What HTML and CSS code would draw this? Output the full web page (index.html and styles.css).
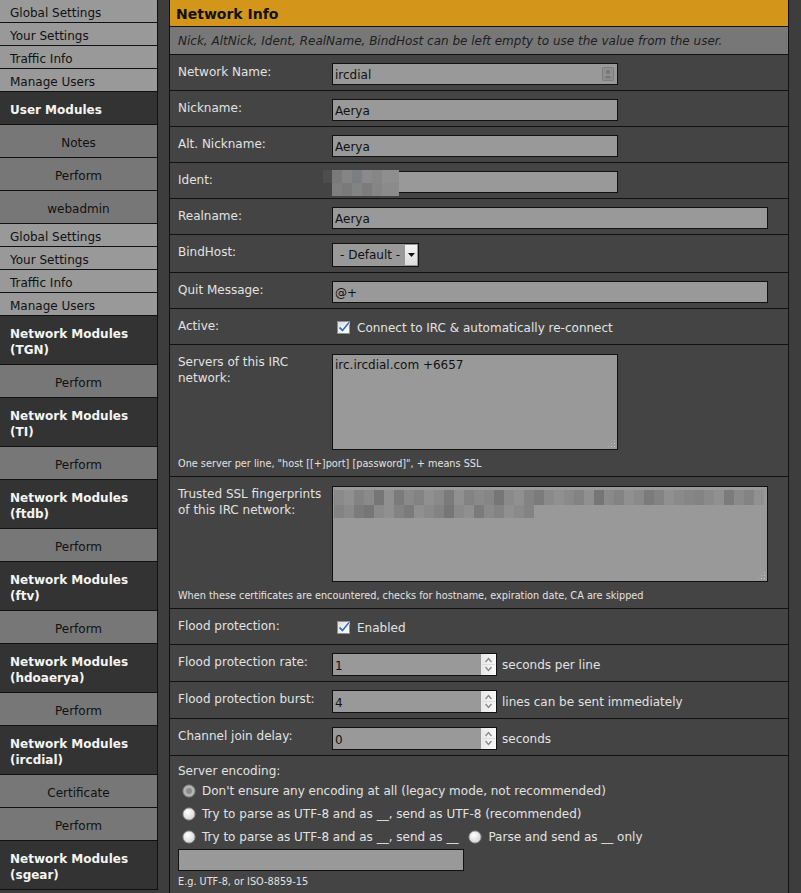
FILE: index.html
```html
<!DOCTYPE html>
<html>
<head>
<meta charset="utf-8">
<title>Network Info</title>
<link rel="stylesheet" href="styles.css">
</head>
<body>
<div class="page">
  <nav class="side">
    <a class="it lt">Global Settings</a>
    <a class="it lt">Your Settings</a>
    <a class="it lt">Traffic Info</a>
    <a class="it lt">Manage Users</a>
    <div class="it dk">User Modules</div>
    <a class="it mid">Notes</a>
    <a class="it mid">Perform</a>
    <a class="it mid">webadmin</a>
    <a class="it lt">Global Settings</a>
    <a class="it lt">Your Settings</a>
    <a class="it lt">Traffic Info</a>
    <a class="it lt">Manage Users</a>
    <div class="it dk">Network Modules (TGN)</div>
    <a class="it mid">Perform</a>
    <div class="it dk">Network Modules (TI)</div>
    <a class="it mid">Perform</a>
    <div class="it dk">Network Modules (ftdb)</div>
    <a class="it mid">Perform</a>
    <div class="it dk">Network Modules (ftv)</div>
    <a class="it mid">Perform</a>
    <div class="it dk">Network Modules (hdoaerya)</div>
    <a class="it mid">Perform</a>
    <div class="it dk">Network Modules (ircdial)</div>
    <a class="it mid">Certificate</a>
    <a class="it mid">Perform</a>
    <div class="it dk">Network Modules (sgear)</div>
  </nav>

  <main class="panel">
    <div class="ph">Network Info</div>
    <div class="pnote">Nick, AltNick, Ident, RealName, BindHost can be left empty to use the value from the user.</div>

    <div class="row">
      <div class="lbl">Network Name:</div>
      <div class="fld"><span class="wrap"><input class="txt short" value="ircdial"><svg class="card" viewBox="0 0 12 14" width="12" height="14"><rect x="0.5" y="0.5" width="11" height="13" rx="1" fill="#8e8e8e" stroke="#777"/><circle cx="6" cy="5" r="2" fill="#6f6f6f"/><path d="M2.5 11 Q6 6.5 9.5 11 Z" fill="#6f6f6f"/><rect x="3" y="11.5" width="6" height="1" fill="#7a8a7a"/></svg></span></div>
    </div>
    <div class="row">
      <div class="lbl">Nickname:</div>
      <div class="fld"><input class="txt short" value="Aerya"></div>
    </div>
    <div class="row">
      <div class="lbl">Alt. Nickname:</div>
      <div class="fld"><input class="txt short" value="Aerya"></div>
    </div>
    <div class="row">
      <div class="lbl">Ident:</div>
      <div class="fld"><span class="wrap"><input class="txt short" value=""><svg class="blur-id" width="76" height="26" viewBox="0 0 76 26"><rect x="0" y="0" width="9" height="13" fill="#4d4d4d"/><rect x="9" y="0" width="10" height="13" fill="#7a7a7a"/><rect x="19" y="0" width="10" height="13" fill="#858585"/><rect x="29" y="0" width="10" height="13" fill="#7b7f7f"/><rect x="39" y="0" width="10" height="13" fill="#8a8a8a"/><rect x="49" y="0" width="10" height="13" fill="#868686"/><rect x="59" y="0" width="17" height="13" fill="#8e8e8e"/><rect x="9" y="13" width="10" height="13" fill="#7e7e7e"/><rect x="19" y="13" width="10" height="13" fill="#7a7a7a"/><rect x="29" y="13" width="10" height="13" fill="#838383"/><rect x="39" y="13" width="10" height="13" fill="#7c7c7c"/><rect x="49" y="13" width="10" height="13" fill="#858585"/><rect x="59" y="13" width="17" height="13" fill="#8b8b8b"/></svg></span></div>
    </div>
    <div class="row">
      <div class="lbl">Realname:</div>
      <div class="fld"><input class="txt long" value="Aerya"></div>
    </div>
    <div class="row">
      <div class="lbl">BindHost:</div>
      <div class="fld"><span class="sel"><span class="selv">- Default -</span><span class="selb"><svg width="7" height="4" viewBox="0 0 7 4"><path d="M0 0H7L3.5 4Z" fill="#111"/></svg></span></span></div>
    </div>
    <div class="row">
      <div class="lbl">Quit Message:</div>
      <div class="fld"><input class="txt long" value="@+"></div>
    </div>
    <div class="row">
      <div class="lbl">Active:</div>
      <div class="fld chk"><svg class="cb" width="14" height="14" viewBox="0 0 14 14"><defs><linearGradient id="cbg" x1="0" y1="0" x2="1" y2="1"><stop offset="0" stop-color="#dcdcdc"/><stop offset="1" stop-color="#ffffff"/></linearGradient></defs><rect x="0.5" y="1.5" width="12" height="12" fill="url(#cbg)" stroke="#8e8f8f"/><path d="M2.5 7.5 L5.5 10.5 L12 2.5" fill="none" stroke="#fff" stroke-width="3.2"/><path d="M2.5 7.5 L5.5 10.5 L12 2.5" fill="none" stroke="#3b6fc4" stroke-width="1.8"/></svg><span>Connect to IRC &amp; automatically re-connect</span></div>
    </div>
    <div class="row">
      <div class="lbl">Servers of this IRC network:</div>
      <div class="fld"><span class="wrap"><textarea class="ta short">irc.ircdial.com +6657</textarea><i class="grip"></i></span></div>
      <div class="hint">One server per line, "host [[+]port] [password]", + means SSL</div>
    </div>
    <div class="row">
      <div class="lbl">Trusted SSL fingerprints of this IRC network:</div>
      <div class="fld"><span class="wrap"><textarea class="ta long"></textarea><i class="grip"></i><svg class="blur-fp" width="430" height="28" viewBox="0 0 430 28"><g><rect x="0" width="10" height="15" fill="#8a8a8a"/><rect x="10" width="10" height="15" fill="#909090"/><rect x="20" width="10" height="15" fill="#838383"/><rect x="30" width="10" height="15" fill="#8a8a8a"/><rect x="40" width="10" height="15" fill="#767676"/><rect x="50" width="10" height="15" fill="#909090"/><rect x="60" width="10" height="15" fill="#7b7b7b"/><rect x="70" width="10" height="15" fill="#8a8a8a"/><rect x="80" width="10" height="15" fill="#838383"/><rect x="90" width="10" height="15" fill="#909090"/><rect x="100" width="10" height="15" fill="#8a8a8a"/><rect x="110" width="10" height="15" fill="#7b7b7b"/><rect x="120" width="10" height="15" fill="#909090"/><rect x="130" width="10" height="15" fill="#838383"/><rect x="140" width="10" height="15" fill="#8a8a8a"/><rect x="150" width="10" height="15" fill="#868686"/><rect x="160" width="10" height="15" fill="#767676"/><rect x="170" width="10" height="15" fill="#8a8a8a"/><rect x="180" width="10" height="15" fill="#909090"/><rect x="190" width="10" height="15" fill="#838383"/><rect x="200" width="10" height="15" fill="#7b7b7b"/><rect x="210" width="10" height="15" fill="#8a8a8a"/><rect x="220" width="10" height="15" fill="#909090"/><rect x="230" width="10" height="15" fill="#8a8a8a"/><rect x="240" width="10" height="15" fill="#838383"/><rect x="250" width="10" height="15" fill="#909090"/><rect x="260" width="10" height="15" fill="#767676"/><rect x="270" width="10" height="15" fill="#8a8a8a"/><rect x="280" width="10" height="15" fill="#838383"/><rect x="290" width="10" height="15" fill="#909090"/><rect x="300" width="10" height="15" fill="#8a8a8a"/><rect x="310" width="10" height="15" fill="#7b7b7b"/><rect x="320" width="10" height="15" fill="#838383"/><rect x="330" width="10" height="15" fill="#909090"/><rect x="340" width="10" height="15" fill="#8a8a8a"/><rect x="350" width="10" height="15" fill="#868686"/><rect x="360" width="10" height="15" fill="#838383"/><rect x="370" width="10" height="15" fill="#8a8a8a"/><rect x="380" width="10" height="15" fill="#909090"/><rect x="390" width="10" height="15" fill="#7b7b7b"/><rect x="400" width="10" height="15" fill="#8a8a8a"/><rect x="410" width="10" height="15" fill="#838383"/><rect x="420" width="10" height="15" fill="#909090"/></g><g><rect x="0" y="15" width="10" height="13" fill="#838383"/><rect x="10" y="15" width="10" height="13" fill="#8a8a8a"/><rect x="20" y="15" width="10" height="13" fill="#7b7b7b"/><rect x="30" y="15" width="10" height="13" fill="#767676"/><rect x="40" y="15" width="10" height="13" fill="#8a8a8a"/><rect x="50" y="15" width="10" height="13" fill="#909090"/><rect x="60" y="15" width="10" height="13" fill="#838383"/><rect x="70" y="15" width="10" height="13" fill="#7b7b7b"/><rect x="80" y="15" width="10" height="13" fill="#909090"/><rect x="90" y="15" width="10" height="13" fill="#8a8a8a"/><rect x="100" y="15" width="10" height="13" fill="#838383"/><rect x="110" y="15" width="10" height="13" fill="#767676"/><rect x="120" y="15" width="10" height="13" fill="#8a8a8a"/><rect x="130" y="15" width="10" height="13" fill="#909090"/><rect x="140" y="15" width="10" height="13" fill="#7b7b7b"/><rect x="150" y="15" width="10" height="13" fill="#8a8a8a"/><rect x="160" y="15" width="10" height="13" fill="#838383"/><rect x="170" y="15" width="10" height="13" fill="#909090"/><rect x="180" y="15" width="10" height="13" fill="#8a8a8a"/><rect x="190" y="15" width="10" height="13" fill="#838383"/></g></svg></span></div>
      <div class="hint">When these certificates are encountered, checks for hostname, expiration date, CA are skipped</div>
    </div>
    <div class="row">
      <div class="lbl">Flood protection:</div>
      <div class="fld chk"><svg class="cb" width="14" height="14" viewBox="0 0 14 14"><rect x="0.5" y="1.5" width="12" height="12" fill="url(#cbg)" stroke="#8e8f8f"/><path d="M2.5 7.5 L5.5 10.5 L12 2.5" fill="none" stroke="#fff" stroke-width="3.2"/><path d="M2.5 7.5 L5.5 10.5 L12 2.5" fill="none" stroke="#3b6fc4" stroke-width="1.8"/></svg><span>Enabled</span></div>
    </div>
    <div class="row">
      <div class="lbl">Flood protection rate:</div>
      <div class="fld numrow"><span class="num"><input class="numv" value="1"><span class="spin"><svg width="15" height="21" viewBox="0 0 15 21"><path d="M4.5 8 L7.5 4.5 L10.5 8" fill="none" stroke="#888" stroke-width="1.3"/><path d="M4.5 13 L7.5 16.5 L10.5 13" fill="none" stroke="#888" stroke-width="1.3"/><line x1="1" y1="10.5" x2="14" y2="10.5" stroke="#ddd"/></svg></span></span><span class="after">seconds per line</span></div>
    </div>
    <div class="row">
      <div class="lbl">Flood protection burst:</div>
      <div class="fld numrow"><span class="num"><input class="numv" value="4"><span class="spin"><svg width="15" height="21" viewBox="0 0 15 21"><path d="M4.5 8 L7.5 4.5 L10.5 8" fill="none" stroke="#888" stroke-width="1.3"/><path d="M4.5 13 L7.5 16.5 L10.5 13" fill="none" stroke="#888" stroke-width="1.3"/><line x1="1" y1="10.5" x2="14" y2="10.5" stroke="#ddd"/></svg></span></span><span class="after">lines can be sent immediately</span></div>
    </div>
    <div class="row">
      <div class="lbl">Channel join delay:</div>
      <div class="fld numrow"><span class="num"><input class="numv" value="0"><span class="spin"><svg width="15" height="21" viewBox="0 0 15 21"><path d="M4.5 8 L7.5 4.5 L10.5 8" fill="none" stroke="#888" stroke-width="1.3"/><path d="M4.5 13 L7.5 16.5 L10.5 13" fill="none" stroke="#888" stroke-width="1.3"/><line x1="1" y1="10.5" x2="14" y2="10.5" stroke="#ddd"/></svg></span></span><span class="after">seconds</span></div>
    </div>
    <div class="row enc">
      <div class="enc-l">Server encoding:</div>
      <div class="rline"><svg class="rd" width="14" height="14" viewBox="0 0 14 14"><circle cx="7" cy="7" r="6" fill="#b4b4b4" stroke="#8a8a8a"/><circle cx="7" cy="7" r="3" fill="#8c8c8c"/></svg><span>Don't ensure any encoding at all (legacy mode, not recommended)</span></div>
      <div class="rline"><svg class="rd" width="14" height="14" viewBox="0 0 14 14"><defs><radialGradient id="rg" cx="0.4" cy="0.35" r="0.7"><stop offset="0" stop-color="#ffffff"/><stop offset="1" stop-color="#d2d2d2"/></radialGradient></defs><circle cx="7" cy="7" r="6" fill="url(#rg)" stroke="#9a9a9a"/></svg><span>Try to parse as UTF-8 and as __, send as UTF-8 (recommended)</span></div>
      <div class="rline"><svg class="rd" width="14" height="14" viewBox="0 0 14 14"><circle cx="7" cy="7" r="6" fill="url(#rg)" stroke="#9a9a9a"/></svg><span>Try to parse as UTF-8 and as __, send as __</span><svg class="rd rd2" width="14" height="14" viewBox="0 0 14 14"><circle cx="7" cy="7" r="6" fill="url(#rg)" stroke="#9a9a9a"/></svg><span>Parse and send as __ only</span></div>
      <input class="txt short encin" value="">
      <div class="hint eg">E.g. UTF-8, or ISO-8859-15</div>
    </div>
  </main>
</div>
</body>
</html>
```

FILE: styles.css
```css
html, body {
  margin: 0;
  padding: 0;
  height: 100%;
  overflow: hidden;
  background: #3d3d3d;
}
body {
  font-family: "DejaVu Sans", Verdana, sans-serif;
  font-size: 12px;
  color: #e2e2e2;
}
.page {
  display: flex;
  align-items: flex-start;
  gap: 11px;
}

/* sidebar */
.side {
  width: 157px;
  flex: none;
  border-right: 1px solid #111;
  display: flex;
  flex-direction: column;
}
.it {
  display: block;
  border-bottom: 1px solid #111;
  line-height: 16px;
  padding: 10px 10px 6px;
}
.lt {
  background: #999;
  color: #111;
  padding: 5px 10px 1px;
}
.mid {
  background: #777;
  color: #111;
  text-align: center;
}
.dk {
  background: #333;
  color: #f4f4f4;
  font-weight: bold;
}

/* panel */
.panel {
  width: 618px;
  flex: none;
  background: #444;
  border-left: 1px solid #111;
  border-right: 1px solid #111;
}
.ph {
  background: #d4961a;
  color: #111;
  font-weight: bold;
  font-size: 14px;
  height: 26px;
  line-height: 28px;
  padding-left: 6px;
  border-bottom: 1px solid #111;
}
.pnote {
  background: #777;
  color: #1e1e1e;
  font-style: italic;
  height: 27px;
  line-height: 29px;
  padding-left: 8px;
  border-bottom: 1px solid #111;
}
.row {
  display: grid;
  grid-template-columns: 154px 1fr;
  padding: 8px 8px 5px;
  border-bottom: 1px solid #111;
}
.lbl {
  padding-top: 1px;
  line-height: 16px;
  padding-right: 4px;
}
.fld {
  display: flex;
  align-items: flex-start;
}
.wrap {
  position: relative;
  display: inline-block;
}
.txt {
  box-sizing: border-box;
  height: 22px;
  margin: 0;
  border: 1px solid #111;
  background: #999;
  color: #111;
  font: 12px "DejaVu Sans", Verdana, sans-serif;
  padding: 2px 2px 0;
  outline: none;
  display: block;
}
.short { width: 286px; }
.long { width: 436px; }

.card {
  position: absolute;
  right: 4px;
  top: 4px;
  opacity: 0.85;
}
.blur-id {
  position: absolute;
  left: -9px;
  top: -1px;
}
.blur-fp {
  position: absolute;
  left: 2px;
  top: 5px;
}

/* select */
.sel {
  box-sizing: border-box;
  display: flex;
  width: 87px;
  height: 24px;
  border: 1px solid #111;
  background: #999;
  color: #111;
}
.selv {
  flex: 1;
  padding-left: 7px;
  line-height: 23px;
  font-size: 12px;
}
.selb {
  width: 12px;
  margin: 1px 1px 1px 0;
  background: linear-gradient(#f4f4f4, #dcdcdc);
  display: flex;
  align-items: center;
  justify-content: center;
}

/* checkbox */
.chk {
  align-items: flex-start;
  padding-top: 2px;
  height: 20px;
}
.cb {
  margin-left: 5px;
  margin-right: 6px;
  margin-top: 1px;
  flex: none;
}
.chk span {
  line-height: 16px;
  padding-top: 1px;
}

/* textarea */
.ta {
  box-sizing: border-box;
  display: block;
  height: 96px;
  margin: 1px 0 0;
  border: 1px solid #111;
  background: #999;
  color: #111;
  font: 12px "DejaVu Sans", Verdana, sans-serif;
  padding: 3px 2px;
  resize: none;
  outline: none;
}
.grip {
  position: absolute;
  right: 2px;
  bottom: 2px;
  width: 9px;
  height: 9px;
  background:
    radial-gradient(circle, #c8c8c8 0.8px, transparent 1px) 0 0 / 3px 3px;
  clip-path: polygon(100% 0, 100% 100%, 0 100%);
}
.hint {
  grid-column: 1 / -1;
  font-family: "DejaVu Sans Condensed", "DejaVu Sans", sans-serif;
  font-size: 10.8px;
  line-height: 15px;
  margin-top: 6px;
  color: #e2e2e2;
}

/* number */
.numrow {
  align-items: center;
}
.num {
  box-sizing: border-box;
  display: flex;
  width: 165px;
  height: 23px;
  border: 1px solid #111;
  background: #999;
}
.numv {
  flex: 1;
  min-width: 0;
  border: 0;
  margin: 0;
  background: transparent;
  color: #111;
  font: 12px "DejaVu Sans", Verdana, sans-serif;
  padding: 2px 2px 0;
  outline: none;
}
.spin {
  width: 15px;
  background: linear-gradient(90deg, #e8e8e8, #f8f8f8);
  display: flex;
}
.after {
  margin-left: 5px;
}

/* encoding */
.enc {
  display: block;
  padding-top: 7px;
  padding-bottom: 6px;
}
.enc-l {
  line-height: 16px;
}
.rline {
  display: flex;
  align-items: center;
  height: 23px;
}
.rd {
  margin-left: 4px;
  margin-right: 6px;
  flex: none;
}
.rd2 {
  margin-left: 10px;
}
.encin {
  margin-top: 1px;
}
.eg {
  margin-top: 3px;
}
```
